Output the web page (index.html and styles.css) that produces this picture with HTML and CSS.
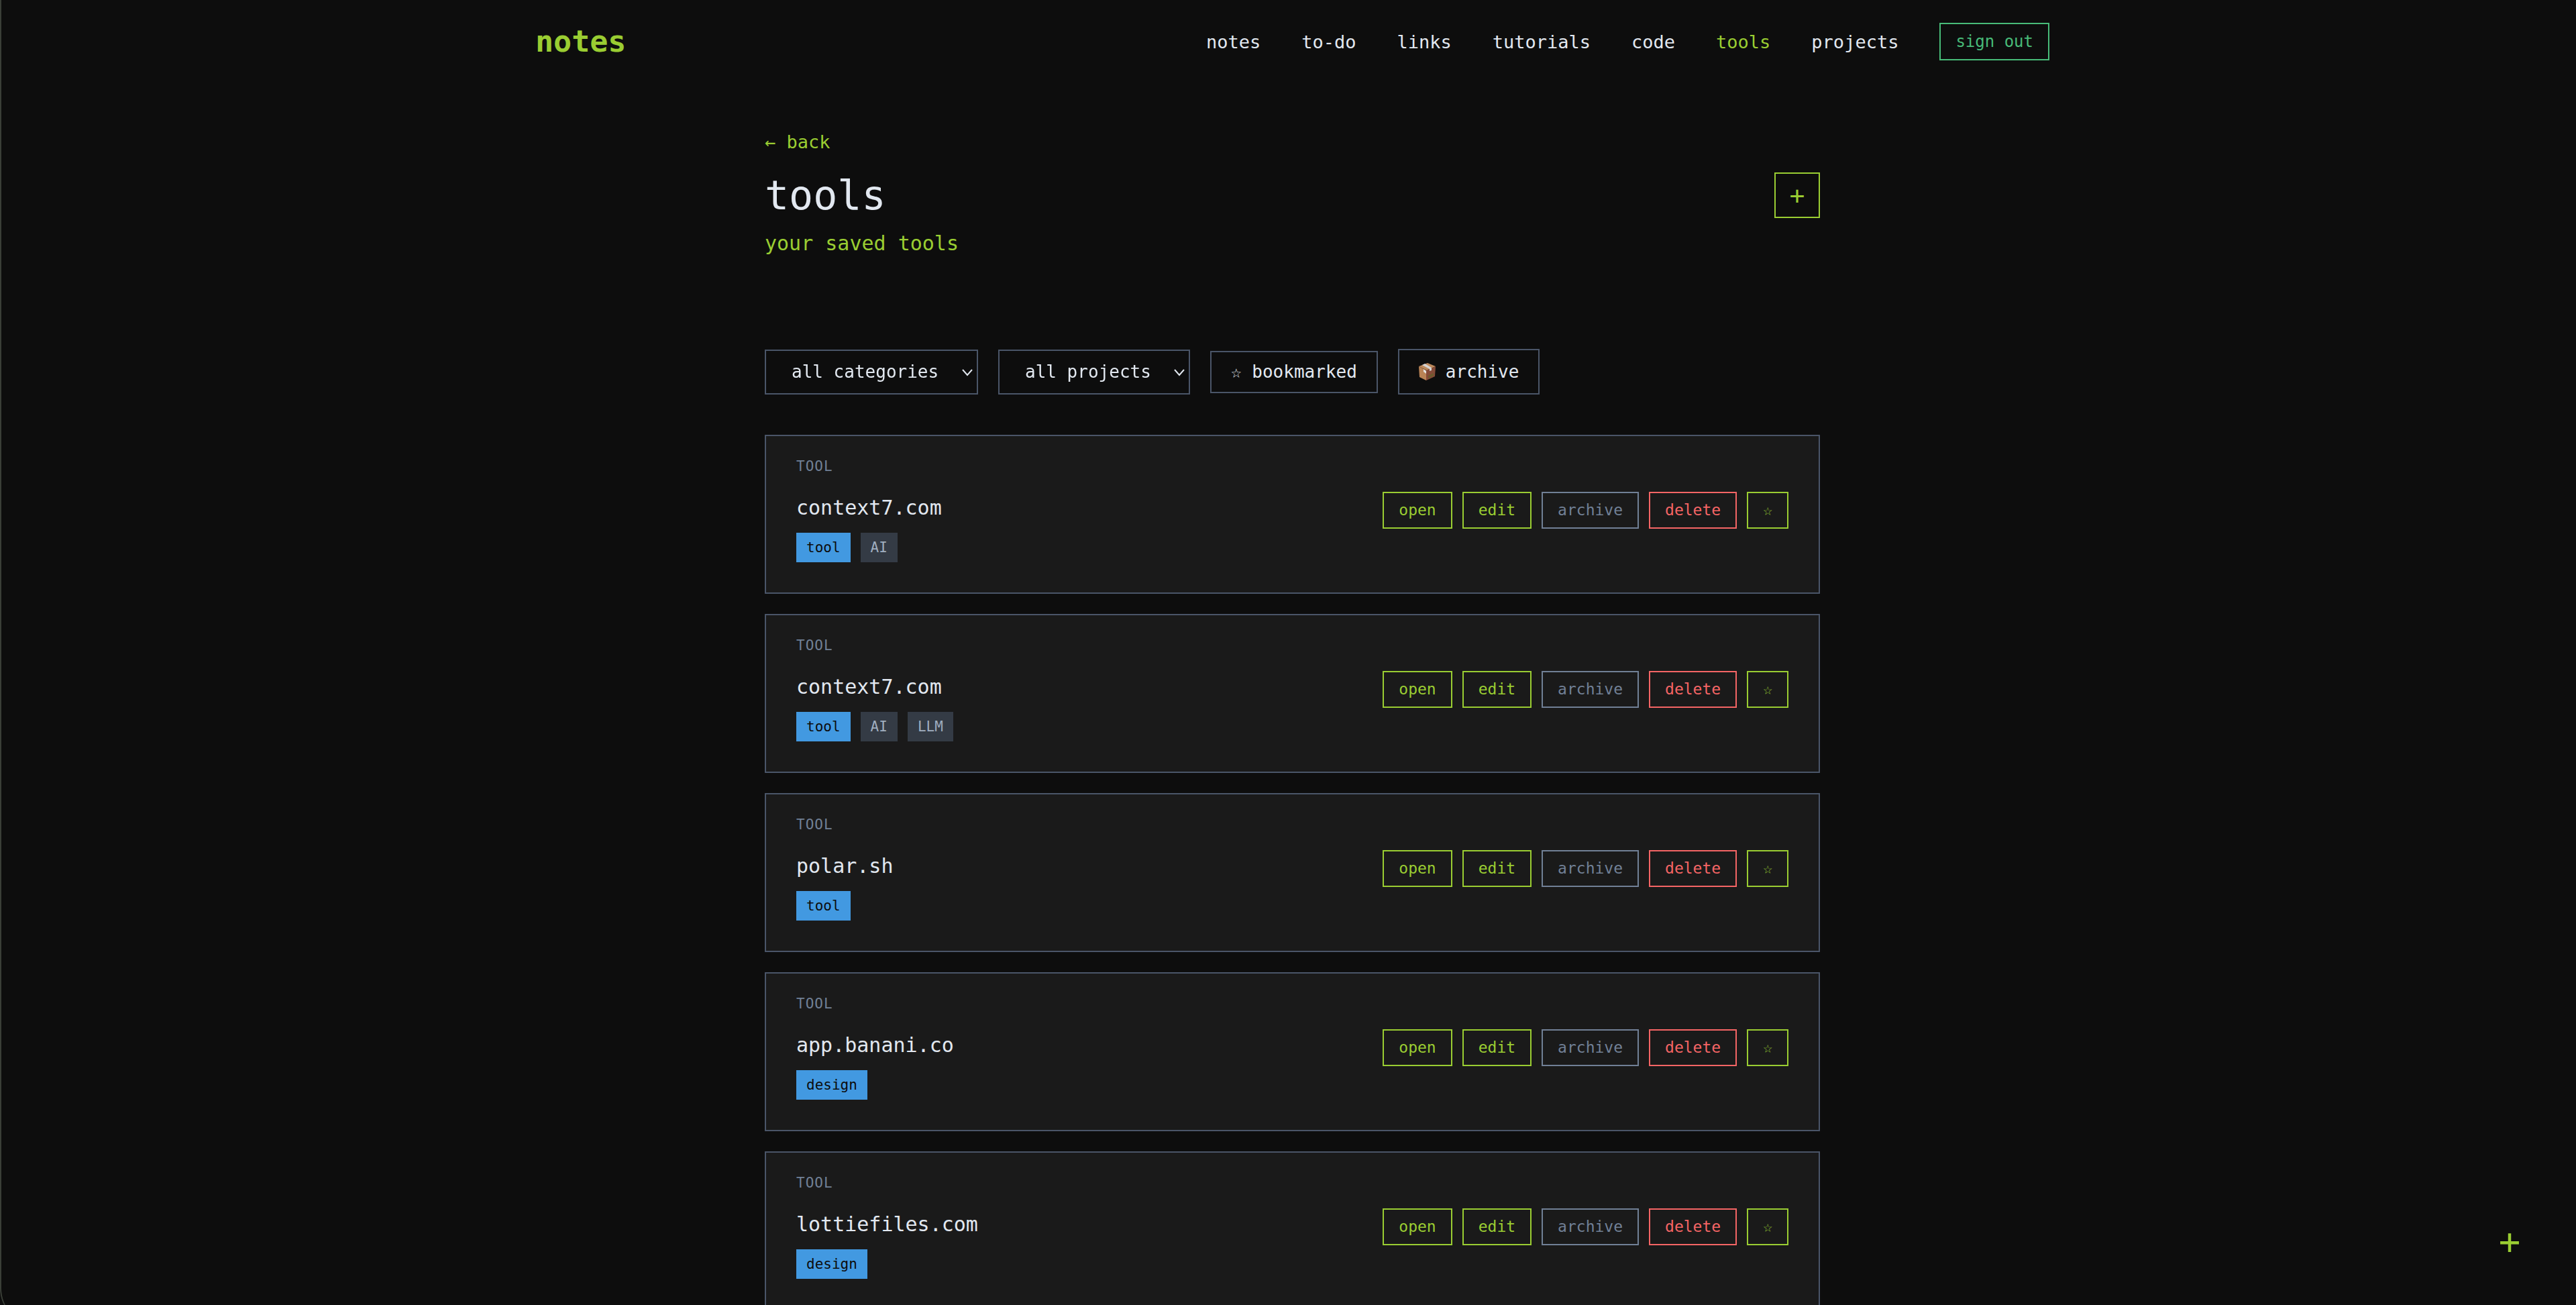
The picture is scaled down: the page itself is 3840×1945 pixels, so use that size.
FILE: index.html
```html
<!DOCTYPE html>
<html lang="en">
<head>
    <meta charset="UTF-8">
    <meta name="viewport" content="width=device-width, initial-scale=1.0">
    <title>notes - tools</title>
    <link rel="stylesheet" href="styles.css">
</head>
<body>
    <header class="header">
        <a href="#" class="logo">notes</a>
        <nav class="nav">
            <a href="#">notes</a>
            <a href="#">to-do</a>
            <a href="#">links</a>
            <a href="#">tutorials</a>
            <a href="#">code</a>
            <a href="#" class="active">tools</a>
            <a href="#">projects</a>
            <button class="sign-out">sign out</button>
        </nav>
    </header>

    <main class="container">
        <a href="#" class="back">← back</a>
        <div class="title-row">
            <h1>tools</h1>
            <button class="add-btn" aria-label="Add tool">+</button>
        </div>
        <p class="subtitle">your saved tools</p>

        <div class="filters">
            <div class="select-wrap">
                <select aria-label="Category">
                    <option>all categories</option>
                </select>
                <svg class="chevron" width="18" height="12" viewBox="0 0 18 12"><path d="M2 2l7 8 7-8"/></svg>
            </div>
            <div class="select-wrap">
                <select aria-label="Project">
                    <option>all projects</option>
                </select>
                <svg class="chevron" width="18" height="12" viewBox="0 0 18 12"><path d="M2 2l7 8 7-8"/></svg>
            </div>
            <button class="filter-btn">☆ bookmarked</button>
            <button class="filter-btn archive-filter">
                <svg class="box-icon" width="25" height="26" viewBox="0 0 25 26">
                    <path fill="#bd8a5c" d="M13 0L25 5 12 11 0 5z"/>
                    <path fill="#b98355" d="M0 5l11 6v15L1 21z"/>
                    <path fill="#854b38" d="M11 11l14-6-1 15-13 6z"/>
                    <path fill="#d5d3d2" d="M5 3l4-2 10 6v4l-3 1V9z"/>
                    <path fill="#e3e1df" d="M7 9l4 3v4l-4-3z"/>
                    <path fill="#6d5a2d" d="M14 19l8-4v4l-8 4z"/>
                </svg>
                archive
            </button>
        </div>

        <div class="tools">
            <article class="card">
                <div class="info">
                    <div class="type">tool</div>
                    <h2>context7.com</h2>
                    <div class="tags">
                        <span class="tag category">tool</span>
                        <span class="tag">AI</span>
                    </div>
                </div>
                <div class="actions">
                    <button>open</button>
                    <button>edit</button>
                    <button class="archive">archive</button>
                    <button class="delete">delete</button>
                    <button aria-label="Bookmark">☆</button>
                </div>
            </article>

            <article class="card">
                <div class="info">
                    <div class="type">tool</div>
                    <h2>context7.com</h2>
                    <div class="tags">
                        <span class="tag category">tool</span>
                        <span class="tag">AI</span>
                        <span class="tag">LLM</span>
                    </div>
                </div>
                <div class="actions">
                    <button>open</button>
                    <button>edit</button>
                    <button class="archive">archive</button>
                    <button class="delete">delete</button>
                    <button aria-label="Bookmark">☆</button>
                </div>
            </article>

            <article class="card">
                <div class="info">
                    <div class="type">tool</div>
                    <h2>polar.sh</h2>
                    <div class="tags">
                        <span class="tag category">tool</span>
                    </div>
                </div>
                <div class="actions">
                    <button>open</button>
                    <button>edit</button>
                    <button class="archive">archive</button>
                    <button class="delete">delete</button>
                    <button aria-label="Bookmark">☆</button>
                </div>
            </article>

            <article class="card">
                <div class="info">
                    <div class="type">tool</div>
                    <h2>app.banani.co</h2>
                    <div class="tags">
                        <span class="tag category">design</span>
                    </div>
                </div>
                <div class="actions">
                    <button>open</button>
                    <button>edit</button>
                    <button class="archive">archive</button>
                    <button class="delete">delete</button>
                    <button aria-label="Bookmark">☆</button>
                </div>
            </article>

            <article class="card">
                <div class="info">
                    <div class="type">tool</div>
                    <h2>lottiefiles.com</h2>
                    <div class="tags">
                        <span class="tag category">design</span>
                    </div>
                </div>
                <div class="actions">
                    <button>open</button>
                    <button>edit</button>
                    <button class="archive">archive</button>
                    <button class="delete">delete</button>
                    <button aria-label="Bookmark">☆</button>
                </div>
            </article>
        </div>
    </main>

    <button class="fab" aria-label="Quick add">+</button>
</body>
</html>
```

FILE: styles.css
```css
* {
    box-sizing: border-box;
    margin: 0;
    padding: 0;
}

html {
    background-color: #0d0d0d;
    scrollbar-width: none;
}

body {
    font-family: 'DejaVu Sans Mono', monospace;
    font-size: 27px;
    line-height: 31px;
    color: #e2e8f0;
    padding-left: 13px;
}

/* window edge */
body::before {
    content: "";
    position: fixed;
    top: -60px;
    right: -60px;
    bottom: -30px;
    left: 0;
    border-left: 2px solid #3a3f37;
    border-bottom-left-radius: 55px;
    pointer-events: none;
}

a {
    color: inherit;
    text-decoration: none;
}

button, select {
    font-family: inherit;
    color: inherit;
    background: transparent;
    border: 2px solid currentColor;
    border-radius: 0;
    cursor: pointer;
}

.header {
    display: flex;
    justify-content: space-between;
    align-items: center;
    width: 100%;
    max-width: 2257px;
    margin: 0 auto;
    padding: 34px 0;
}

.logo {
    font-size: 45px;
    line-height: 52px;
    font-weight: bold;
    color: #9acd32;
}

.nav {
    display: flex;
    align-items: center;
    gap: 61px;
}

.nav .active {
    color: #9acd32;
}

.sign-out {
    font-size: 24px;
    line-height: 28px;
    padding: 12px 22px;
    color: #48bb78;
}

.container {
    width: 100%;
    max-width: 1573px;
    margin: 0 auto;
    padding-top: 72px;
}

.back {
    display: block;
    width: fit-content;
    margin-bottom: 28px;
    color: #9acd32;
}

.title-row {
    display: flex;
    justify-content: space-between;
    align-items: center;
}

h1 {
    font-size: 60px;
    line-height: 72px;
    font-weight: normal;
}

.add-btn {
    width: 68px;
    height: 68px;
    font-size: 38px;
    line-height: 44px;
    color: #9acd32;
}

.subtitle {
    margin-top: 18px;
    font-size: 30px;
    line-height: 35px;
    color: #9acd32;
}

.filters {
    display: flex;
    align-items: center;
    gap: 30px;
    margin-top: 140px;
}

.select-wrap {
    position: relative;
}

.filters select, .filter-btn {
    font-size: 26px;
    line-height: 31px;
    border-color: #4a5568;
}

.filters select {
    display: block;
    appearance: none;
    padding: 16px 56px 16px 38px;
}

.chevron {
    position: absolute;
    right: 7px;
    top: 28px;
    fill: none;
    stroke: #e2e8f0;
    stroke-width: 2;
    pointer-events: none;
}

.filter-btn {
    padding: 14px 29px;
}

.archive-filter {
    display: flex;
    align-items: center;
    gap: 15px;
    padding: 16px 29px;
    line-height: 32px;
}

.tools {
    display: flex;
    flex-direction: column;
    gap: 30px;
    margin-top: 60px;
}

.card {
    display: flex;
    justify-content: space-between;
    align-items: center;
    padding: 33px 45px 45px;
    background-color: #1a1a1a;
    border: 2px solid #4a5568;
}

.type {
    margin-bottom: 32px;
    font-size: 21px;
    line-height: 24px;
    letter-spacing: 1px;
    text-transform: uppercase;
    color: #718096;
}

h2 {
    font-size: 30px;
    line-height: 35px;
    font-weight: normal;
}

.tags {
    display: flex;
    gap: 15px;
    margin-top: 20px;
}

.tag {
    padding: 10px 15px;
    font-size: 21px;
    line-height: 24px;
    color: #a0aec0;
    background-color: #343b45;
}

.tag.category {
    color: #0d0d0d;
    background-color: #4299e1;
}

.actions {
    display: flex;
    gap: 15px;
}

.actions button {
    padding: 12px 22px;
    font-size: 23px;
    line-height: 27px;
    color: #9acd32;
}

.actions .archive {
    color: #718096;
}

.actions .delete {
    color: #f56565;
}

.fab {
    position: fixed;
    right: 45px;
    bottom: 40px;
    width: 108px;
    height: 108px;
    font-size: 54px;
    line-height: 62px;
    color: #9acd32;
    border: none;
}
```
